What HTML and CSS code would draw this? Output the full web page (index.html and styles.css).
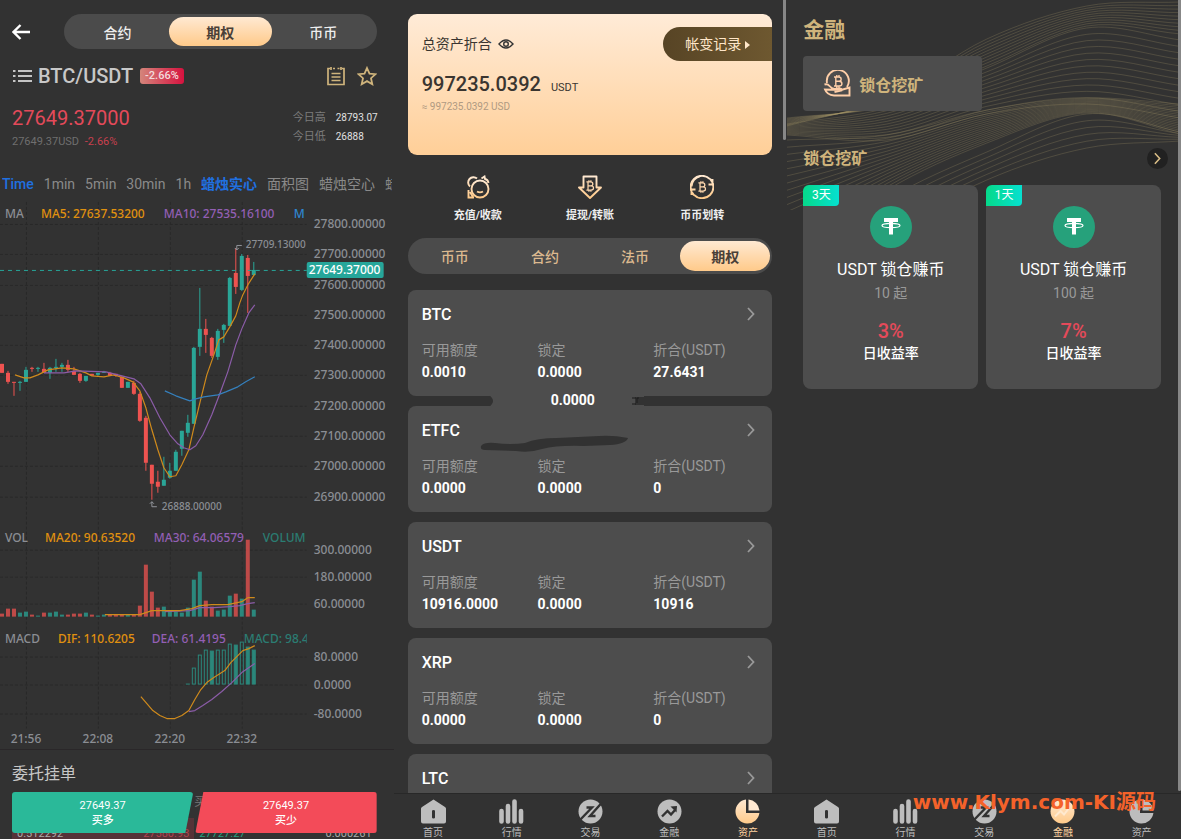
FILE: index.html
```html
<!DOCTYPE html>
<html lang="zh-CN">
<head>
  <meta charset="UTF-8" />
  <meta name="viewport" content="width=device-width, initial-scale=1.0"/>
  <title>BTC/USDT</title>
  <link rel="stylesheet" href="styles.css">
</head>
<body>

  <!-- Shared icons -->
  <svg class="sprite" aria-hidden="true">
    <defs>
      <linearGradient id="gold" x1="0" y1="0" x2="0" y2="1">
        <stop offset="0" stop-color="#ffe9d2"/>
        <stop offset="1" stop-color="#ffca8a"/>
      </linearGradient>
    </defs>
    <symbol id="chevron" viewBox="0 0 8 14"><path d="M1 1l5.5 6L1 13" fill="none" stroke="currentColor" stroke-width="1.8"/></symbol>
    <symbol id="btc" viewBox="0 0 10 14">
      <path d="M1 2.500h4.600c3.400 0 3.400 4.300 0 4.300H2.600h3.400c3.900 0 3.900 4.700 0 4.700H1M2.800 2.500v9M3.800.5v2M6 .5v2M3.800 11.500v2M6 11.500v2" fill="none" stroke="currentColor" stroke-width="1.400"/>
    </symbol>
    <symbol id="home" viewBox="0 0 25 25">
      <path fill-rule="evenodd" d="M12.500 0.500L24 8a2 2 0 0 1 1 1.800V22.500a2 2 0 0 1-2 2H2a2 2 0 0 1-2-2V9.800A2 2 0 0 1 1 8zM11 12v6.500q0 1 1.500 1t1.500-1V12q0-1-1.500-1t-1.500 1z" fill="currentColor"/>
    </symbol>
    <symbol id="bars" viewBox="0 0 25 25">
      <path d="M2.500 12v10.500M9 7v15.500M15.500 2.500v20M22 12v10.500" stroke="currentColor" stroke-width="4.600" stroke-linecap="round"/>
    </symbol>
    <symbol id="trade" viewBox="0 0 25 25">
      <circle cx="12.500" cy="12.500" r="12" fill="currentColor"/>
      <path d="M1 22L14 8.500H8.500M24 3.500L12 17h5.500" fill="none" stroke="#323232" stroke-width="2.400"/>
    </symbol>
    <symbol id="finance" viewBox="0 0 25 25">
      <circle cx="12.500" cy="12.500" r="12" fill="currentColor"/>
      <path d="M5 17.500l5.500-5.500 3.500 3.500 4.500-5" fill="none" stroke="#323232" stroke-width="2.400"/>
      <path d="M13.500 7.500L20 7l-.5 6.500z" fill="#323232"/>
    </symbol>
    <symbol id="finance-on" viewBox="0 0 25 25">
      <circle cx="12.500" cy="12.500" r="12" fill="url(#gold)"/>
      <path d="M5 17.500l5.500-5.500 3.500 3.500 5.500-7" fill="none" stroke="#ffe9cf" stroke-width="2"/>
    </symbol>
    <symbol id="assets" viewBox="0 0 25 25">
      <path d="M11 .6V14h13.400A12 12 0 1 1 11 .6z" fill="currentColor"/>
      <path d="M13.500.5A12 12 0 0 1 24.500 11.500h-11z" fill="currentColor"/>
    </symbol>
    <symbol id="assets-on" viewBox="0 0 25 25">
      <path d="M11 .6V14h13.400A12 12 0 1 1 11 .6z" fill="url(#gold)"/>
      <path d="M13.500.5A12 12 0 0 1 24.500 11.500h-11z" fill="#ffe9d2"/>
    </symbol>
    <symbol id="tether" viewBox="0 0 42 42">
      <circle cx="21" cy="21" r="21" fill="#26a17b"/>
      <path d="M14 12h14v4h-5v12.500h-4V16h-5z" fill="#fff"/>
      <ellipse cx="21" cy="19.500" rx="9" ry="2.200" fill="none" stroke="#fff" stroke-width="1.200"/>
    </symbol>
  </svg>

  <main class="screens">

    <!-- Trade screen -->
    <section class="screen trade">
      <header class="trade-head">
        <a class="back" href="#" aria-label="返回"><svg viewBox="0 0 18 16"><path d="M8.500 1L1.500 8l7 7M2 8h16" fill="none" stroke="#fff" stroke-width="2.400"/></svg></a>
        <div class="switch">
          <button>合约</button>
          <button class="active">期权</button>
          <button>币币</button>
        </div>
      </header>

      <div class="pair">
        <svg class="pair-menu" viewBox="0 0 19 14"><path d="M5 2h14M5 7h14M5 12h14M0 2h2.500M0 7h2.500M0 12h2.500" stroke="#c4c4c4" stroke-width="1.800"/></svg>
        <h1>BTC/USDT</h1>
        <span class="change">-2.66%</span>
        <button class="pair-tool" aria-label="订单"><svg viewBox="0 0 20 20"><path d="M4 2.500H2v16h16v-16h-2M7 2.500h2M11.500 2.500h2M5 1v3M15 1v3M5.500 7.500h9M5.500 11h9M5.500 14.500h9" fill="none" stroke="#cfb47c" stroke-width="1.700"/></svg></button>
        <button class="pair-tool" aria-label="收藏"><svg viewBox="0 0 20 20"><path d="M10 2l2.500 5.600 6 .6-4.500 4 1.300 6L10 15.100 4.700 18.200 6 12.200l-4.500-4 6-.6z" fill="none" stroke="#cfb47c" stroke-width="1.800"/></svg></button>
      </div>

      <div class="quote">
        <div>
          <p class="price">27649.37000</p>
          <p class="usd">27649.37USD <span>-2.66%</span></p>
        </div>
        <dl class="range">
          <dt>今日高</dt><dd>28793.07</dd>
          <dt>今日低</dt><dd>26888</dd>
        </dl>
      </div>

      <div class="periods">
        <button class="active">Time</button>
        <button>1min</button>
        <button>5min</button>
        <button>30min</button>
        <button>1h</button>
        <button class="active bold">蜡烛实心</button>
        <button>面积图</button>
        <button>蜡烛空心</button>
        <button>蜡烛</button>
      </div>

      <svg class="chart" id="chart" viewBox="0 198 394 548">
        <clipPath id="plot"><rect x="0" y="198" width="307" height="548"/></clipPath>
        <g id="grid"></g>
        <g id="series"></g>
        <g clip-path="url(#plot)">
          <text x="5" y="218">MA</text>
          <text x="41" y="218" class="orange">MA5: 27637.53200</text>
          <text x="164" y="218" class="purple">MA10: 27535.16100</text>
          <text x="294" y="218" class="blue">M</text>
          <text x="5" y="542">VOL</text>
          <text x="45" y="542" class="orange">MA20: 90.63520</text>
          <text x="154" y="542" class="purple">MA30: 64.06579</text>
          <text x="263" y="542" class="teal">VOLUM</text>
          <text x="5" y="643">MACD</text>
          <text x="58" y="643" class="orange">DIF: 110.6205</text>
          <text x="152" y="643" class="purple">DEA: 61.4195</text>
          <text x="244" y="643" class="teal">MACD: 98.4</text>
        </g>
        <path d="M0 270.500h307" stroke="#26a69a" stroke-dasharray="4 4"/>
        <path d="M237 250v-4.500h5M235 248l2 2 2-2M152 502v5h5M150 504l2-2 2 2" fill="none" stroke="#92959b"/>
        <text x="246" y="248" class="small">27709.13000</text>
        <text x="162" y="510" class="small">26888.00000</text>
        <rect x="307" y="262" width="77" height="16" rx="2" fill="#26a69a"/>
        <text x="309" y="274" class="white">27649.37000</text>
      </svg>

      <div class="book">
        <h2>委托挂单</h2>
        <div class="book-head"><span></span><span>买</span></div>
        <div class="book-row">
          <p class="bid"><span>0.512292</span><b>27580.93</b></p>
          <p class="ask"><b>27727.27</b><span>0.000261</span></p>
        </div>
      </div>

      <div class="orders">
        <button class="up">27649.37<span>买多</span></button>
        <button class="down">27649.37<span>买少</span></button>
      </div>
    </section>

    <!-- Assets screen -->
    <section class="screen assets">
      <div class="content">
        <div class="balance">
          <p class="balance-label">总资产折合
            <svg viewBox="0 0 16 10"><path d="M1 5q7-8 14 0q-7 8-14 0z" fill="none" stroke="#333" stroke-width="1.400"/><circle cx="8" cy="5" r="2.300" fill="none" stroke="#333" stroke-width="1.400"/></svg>
          </p>
          <p class="balance-total">997235.0392 <small>USDT</small></p>
          <p class="balance-usd">≈ 997235.0392 USD</p>
          <a class="history" href="#">帐变记录<svg viewBox="0 0 5 8"><path d="M0 0l5 4-5 4z" fill="#ffe6c8"/></svg></a>
        </div>

        <div class="actions">
          <a href="#">
            <svg viewBox="0 0 24 24"><g fill="none" stroke="url(#gold)" stroke-width="1.900"><circle cx="14" cy="14" r="8.500"/><path d="M4 11.500A5 5 0 1 1 11 3.500M15.500 3.500l3-2 .5 2.500q3 .5 3.500 4M2.500 15v7.500H8M4 17l3 5M11 16.500q3 1.800 6 0"/></g></svg>
            充值/收款
          </a>
          <a href="#">
            <svg viewBox="0 0 24 24"><path d="M5.500 1.500h13v11H23L12 23 1 12.500h4.500z" fill="none" stroke="url(#gold)" stroke-width="1.900" stroke-linejoin="round"/><use href="#btc" x="7.500" y="4.500" width="9" height="13"/></svg>
            提现/转账
          </a>
          <a href="#">
            <svg viewBox="0 0 24 24"><path d="M3.800 20A11 11 0 0 1 20 4.200M20.200 4A11 11 0 0 1 4 19.800M1.500 11.500A11 11 0 0 1 10 1.200M22.500 4v5.500h-4M1.500 20v-5.500h4" fill="none" stroke="url(#gold)" stroke-width="1.900"/><use href="#btc" x="7.500" y="5.500" width="9" height="13"/></svg>
            币币划转
          </a>
        </div>

        <div class="switch wallet">
          <button>币币</button>
          <button>合约</button>
          <button>法币</button>
          <button class="active">期权</button>
        </div>

        <div class="coins">
          <article class="coin">
            <a class="coin-name" href="#">BTC<svg><use href="#chevron"/></svg></a>
            <dl>
              <div><dt>可用额度</dt><dd>0.0010</dd></div>
              <div><dt>锁定</dt><dd>0.0000</dd></div>
              <div><dt>折合(USDT)</dt><dd>27.6431</dd></div>
            </dl>
          </article>
          <article class="coin">
            <svg class="bridge" viewBox="0 0 156 12"><path d="M1 0h146v1h9v1h-9v8h9v2H1q8-6 0-12z" fill="#4d4d4d"/><path d="M144 3h4M144 9h4M149 8V3h2" fill="none" stroke="#1c1c1c"/></svg>
            <span class="stray">0.0000</span>
            <svg class="stroke" viewBox="0 0 150 18"><path d="M2 11q3-4 14-3 16 2 30 0Q58 3 78 3l42-2q14-1 29 2-2 6-18 7l-26 1q-26-1-42 3-12 4-26 2L6 15q-5 0-4-4z" fill="#323232"/></svg>
            <a class="coin-name" href="#">ETFC<svg><use href="#chevron"/></svg></a>
            <dl>
              <div><dt>可用额度</dt><dd>0.0000</dd></div>
              <div><dt>锁定</dt><dd>0.0000</dd></div>
              <div><dt>折合(USDT)</dt><dd>0</dd></div>
            </dl>
          </article>
          <article class="coin">
            <a class="coin-name" href="#">USDT<svg><use href="#chevron"/></svg></a>
            <dl>
              <div><dt>可用额度</dt><dd>10916.0000</dd></div>
              <div><dt>锁定</dt><dd>0.0000</dd></div>
              <div><dt>折合(USDT)</dt><dd>10916</dd></div>
            </dl>
          </article>
          <article class="coin">
            <a class="coin-name" href="#">XRP<svg><use href="#chevron"/></svg></a>
            <dl>
              <div><dt>可用额度</dt><dd>0.0000</dd></div>
              <div><dt>锁定</dt><dd>0.0000</dd></div>
              <div><dt>折合(USDT)</dt><dd>0</dd></div>
            </dl>
          </article>
          <article class="coin">
            <a class="coin-name" href="#">LTC<svg><use href="#chevron"/></svg></a>
          </article>
        </div>
      </div>

      <nav class="tabbar">
        <a href="#"><svg><use href="#home"/></svg>首页</a>
        <a href="#"><svg><use href="#bars"/></svg>行情</a>
        <a href="#"><svg><use href="#trade"/></svg>交易</a>
        <a href="#"><svg><use href="#finance"/></svg>金融</a>
        <a href="#" class="active"><svg><use href="#assets-on"/></svg>资产</a>
      </nav>
    </section>

    <!-- Finance screen -->
    <section class="screen finance">
      <svg class="waves" id="waves" viewBox="0 0 394 210" preserveAspectRatio="none"></svg>
      <div class="content">
        <h1>金融</h1>
        <a class="mining" href="#">
          <svg viewBox="0 0 28 28"><g fill="none" stroke="#ffcfa8" stroke-width="1.900"><path d="M4 13A11 11 0 1 1 24 17"/><path d="M1.500 14.500q3-1 5 1.500t5 3l5-.5q2.500 0 2 2l-7 1.500M18 20l8.500-2.500v8H11q-7-.5-9-6z"/></g><use href="#btc" x="10" y="4.500" width="10" height="14"/></svg>
          锁仓挖矿
        </a>
        <div class="section-head">
          <h2>锁仓挖矿</h2>
          <a class="more" href="#" aria-label="更多"><svg><use href="#chevron"/></svg></a>
        </div>
        <div class="plans">
          <article class="plan">
            <span class="days">3天</span>
            <svg><use href="#tether"/></svg>
            <h3>USDT 锁仓赚币</h3>
            <p class="min">10 起</p>
            <p class="rate">3%</p>
            <p>日收益率</p>
          </article>
          <article class="plan">
            <span class="days">1天</span>
            <svg><use href="#tether"/></svg>
            <h3>USDT 锁仓赚币</h3>
            <p class="min">100 起</p>
            <p class="rate">7%</p>
            <p>日收益率</p>
          </article>
        </div>
      </div>

      <nav class="tabbar">
        <a href="#"><svg><use href="#home"/></svg>首页</a>
        <a href="#"><svg><use href="#bars"/></svg>行情</a>
        <a href="#"><svg><use href="#trade"/></svg>交易</a>
        <a href="#" class="active"><svg><use href="#finance-on"/></svg>金融</a>
        <a href="#"><svg><use href="#assets"/></svg>资产</a>
      </nav>
      <p class="watermark">www.Klym.com-KI源码</p>
    </section>

  </main>

  <script src="script.js"></script>
</body>
</html>
```
FILE: styles.css
```css
* {
  margin: 0;
  padding: 0;
  box-sizing: border-box;
}

body {
  background: #323232;
  color: #fff;
  font-family: Roboto, 'Noto Sans CJK SC', sans-serif;
  font-size: 14px;
}

a {
  color: inherit;
  text-decoration: none;
}

button {
  font: inherit;
  color: inherit;
  background: none;
  border: none;
  cursor: pointer;
}

.sprite {
  position: absolute;
  width: 0;
  height: 0;
}

.screens {
  display: grid;
  grid-template-columns: repeat(3, minmax(0, 1fr));
  height: 100vh;
}

.screen {
  position: relative;
  display: flex;
  flex-direction: column;
  overflow: hidden;
}

.content {
  flex: 1;
  min-height: 0;
  overflow: hidden;
}

/* Segmented switch */
.switch {
  flex: 1;
  display: flex;
  padding: 3px 2px;
  border-radius: 18px;
  background: #4b4b4b;
}

.switch button {
  flex: 1;
  border-radius: 16px;
  color: #eee;
  font-weight: 500;
}

.switch .active {
  background: linear-gradient(#ffe9d2, #ffca8a);
  color: #4a4038;
  font-weight: 700;
}

/* Trade screen */
.trade-head {
  display: flex;
  align-items: center;
  gap: 34px;
  height: 35px;
  margin: 14px 17px 0 12px;
}

.trade-head .switch {
  height: 35px;
}

.back svg {
  display: block;
  width: 18px;
  height: 16px;
}

.pair {
  display: flex;
  align-items: center;
  height: 20px;
  margin: 17px 17px 0 13px;
}

.pair-menu {
  width: 19px;
  height: 14px;
  margin-right: 6px;
}

.pair h1 {
  font-size: 20px;
  font-weight: 500;
  color: #c8c8c8;
}

.change {
  margin: 0 auto 0 7px;
  padding: 0 5px;
  border-radius: 3px;
  background: linear-gradient(90deg, #d4857b, #d6123f);
  color: #f3dcdc;
  font-size: 11px;
  font-weight: 500;
  line-height: 16px;
}

.pair-tool {
  width: 20px;
  height: 20px;
  margin-left: 11px;
}

.pair-tool svg {
  display: block;
}

.quote {
  display: flex;
  justify-content: space-between;
  margin: 20px 16px 0 12px;
}

.price {
  color: #e44a5a;
  font-size: 20px;
  font-weight: 400;
  line-height: 24px;
}

.usd {
  margin-top: 4px;
  color: #6f6f6f;
  font-size: 11px;
  line-height: 16px;
}

.usd span {
  margin-left: 3px;
  color: #c8404f;
}

.range {
  display: grid;
  grid-template-columns: auto auto;
  column-gap: 10px;
  align-content: start;
  margin-top: 2px;
  color: #e0e0e0;
  font-size: 11px;
  line-height: 19px;
}

.range dt {
  color: #7c7c7c;
}

.range dd {
  font-size: 10px;
}

.periods {
  flex: none;
  display: flex;
  gap: 10px;
  margin: 24px 2px 4px;
  overflow: hidden;
  color: #8a8a8a;
  line-height: 20px;
  white-space: nowrap;
}

.periods button {
  flex: none;
}

.periods .active {
  color: #2070e0;
  font-weight: 500;
}

.periods .bold {
  font-weight: 700;
}

.chart {
  display: block;
  flex: none;
  width: 100%;
}

.chart text {
  fill: #8b8e94;
  font-family: 'Noto Sans', sans-serif;
  font-size: 12px;
  font-weight: 500;
}

.chart .small {
  font-size: 10px;
}

.chart .white {
  fill: #fff;
}

.chart .orange {
  fill: #e0910f;
}

.chart .purple {
  fill: #935fb4;
}

.chart .blue {
  fill: #2f86d0;
}

.chart .teal {
  fill: #2b7d72;
}

.book {
  flex: none;
  margin-top: 3px;
  border-top: 1px solid #2a2729;
  padding: 12px 17px 0 12px;
}

.book h2 {
  color: #c8c8c8;
  font-size: 16px;
  font-weight: 400;
  line-height: 24px;
}

.book-head,
.book-row {
  display: grid;
  grid-template-columns: 1fr 1fr;
}

.book-head {
  color: #777;
  font-size: 12px;
  line-height: 32px;
}

.book-row p {
  display: flex;
  justify-content: space-between;
  padding: 0 5px;
  color: #aaa;
  font-size: 11px;
  line-height: 32px;
}

.book-row b {
  font-weight: 400;
}

.bid {
  background: #553338;
}

.bid b {
  color: #b04450;
}

.ask b {
  color: #27a080;
}

.orders {
  position: absolute;
  right: 17px;
  bottom: 6px;
  left: 12px;
  display: flex;
  gap: 2px;
}

.orders button {
  flex: 1;
  height: 41px;
  border-radius: 3px;
  font-size: 11px;
  line-height: 15px;
}

.orders span {
  display: block;
  font-weight: 500;
}

.up {
  background: #2ab999;
  clip-path: polygon(0 0, 100% 0, calc(100% - 8px) 100%, 0 100%);
}

.down {
  background: #f34b59;
  clip-path: polygon(8px 0, 100% 0, 100% 100%, 0 100%);
}

/* Assets screen */
.assets .content {
  padding: 14px 15px 0 14px;
}

.assets::after,
.finance::after {
  content: "";
  position: absolute;
  top: 0;
  right: 1px;
  width: 3px;
  height: 140px;
  border-radius: 0 0 2px 2px;
  background: #878787;
}

.balance {
  position: relative;
  padding: 20px 14px 41px;
  border-radius: 9px;
  background: linear-gradient(#ffebd7, #ffcf98);
  color: #3a3530;
}

.balance-label {
  display: flex;
  align-items: center;
  gap: 6px;
  line-height: 20px;
}

.balance-label svg {
  width: 16px;
  height: 10px;
}

.balance-total {
  display: flex;
  align-items: baseline;
  gap: 10px;
  height: 26px;
  margin-top: 17px;
  font-size: 20px;
  font-weight: 500;
  line-height: 26px;
}

.balance-total small {
  font-size: 11px;
  font-weight: 400;
}

.balance-usd {
  height: 14px;
  margin-top: 3px;
  color: #b09a82;
  font-size: 10px;
  line-height: 14px;
}

.history {
  position: absolute;
  top: 13px;
  right: 0;
  padding: 0 22px;
  border-radius: 17px 0 0 17px;
  background: linear-gradient(90deg, #574425, #6e5830);
  color: #ffe6c8;
  line-height: 34px;
}

.history svg {
  width: 5px;
  height: 8px;
  margin-left: 4px;
}

.actions {
  display: flex;
  margin: 20px 14px 14px;
}

.actions a {
  flex: 1;
  display: flex;
  flex-direction: column;
  align-items: center;
  gap: 9px;
  color: #eee;
  font-size: 11px;
  font-weight: 700;
  line-height: 16px;
}

.actions svg {
  width: 24px;
  height: 24px;
  color: #ffd8ae;
}

.wallet {
  height: 36px;
}

.wallet button {
  color: #dcb98f;
}

.coins {
  display: grid;
  gap: 10px;
  margin-top: 16px;
}

.coin {
  position: relative;
  padding: 15px 17px 14px 14px;
  border-radius: 8px;
  background: #4d4d4d;
}

.coin-name {
  display: flex;
  justify-content: space-between;
  font-size: 16px;
  font-weight: 500;
  line-height: 20px;
}

.coin-name svg {
  width: 8px;
  height: 14px;
  margin-top: 2px;
  color: #999;
}

.coin dl {
  display: grid;
  grid-template-columns: 1fr 1fr 102px;
  margin-top: 15px;
  line-height: 20px;
}

.coin dt {
  color: #999;
}

.coin dd {
  margin-top: 2px;
  font-weight: 700;
}

/* Filled gap between two cards */
.bridge {
  position: absolute;
  top: -11px;
  left: 80px;
  width: 156px;
  height: 12px;
}

.stray {
  position: absolute;
  top: -16px;
  left: 143px;
  font-weight: 700;
  line-height: 20px;
}

.stroke {
  position: absolute;
  top: 29px;
  left: 71px;
  width: 150px;
  height: 18px;
}

/* Bottom navigation */
.tabbar {
  position: relative;
  display: flex;
  height: 46px;
  padding-top: 5px;
  border-top: 1px solid #282828;
  background: #323232;
}

.tabbar a {
  flex: 1;
  display: flex;
  flex-direction: column;
  align-items: center;
  gap: 3px;
  color: #bdbdbd;
  font-size: 10px;
  line-height: 12px;
}

.tabbar svg {
  width: 25px;
  height: 25px;
}

.tabbar .active {
  color: #ffd3a0;
}

/* Finance screen */
.finance .content {
  position: relative;
  padding: 15px 20px 0 16px;
}

.finance::after {
  right: 0;
  height: calc(100% - 48px);
}

.waves {
  position: absolute;
  top: 0;
  left: 0;
  width: 100%;
  height: 210px;
}

.finance h1 {
  color: #cfb47c;
  font-size: 21px;
  font-weight: 700;
  line-height: 30px;
}

.mining {
  display: flex;
  align-items: center;
  gap: 8px;
  width: 50%;
  height: 55px;
  margin-top: 11px;
  padding-left: 20px;
  border-radius: 4px;
  background: #4d4d4d;
  color: #cfb47c;
  font-size: 16px;
  font-weight: 700;
}

.mining svg {
  width: 28px;
  height: 28px;
}

.mining use {
  color: #ffcfa8;
}

.section-head {
  display: flex;
  align-items: center;
  justify-content: space-between;
  margin: 37px -7px 16px 0;
}

.section-head h2 {
  color: #cfb47c;
  font-size: 16px;
  font-weight: 700;
  line-height: 21px;
}

.more {
  display: grid;
  place-items: center;
  width: 21px;
  height: 21px;
  border-radius: 50%;
  background: #212121;
  color: #d9bd86;
}

.more svg {
  width: 7px;
  height: 13px;
}

.plans {
  display: grid;
  grid-template-columns: 1fr 1fr;
  gap: 8px;
}

.plan {
  position: relative;
  padding: 21px 0 26px;
  border-radius: 8px;
  background: #4d4d4d;
  font-weight: 500;
  line-height: 20px;
  text-align: center;
}

.plan svg {
  display: block;
  width: 42px;
  height: 42px;
  margin: 0 auto 11px;
}

.plan h3 {
  font-size: 16px;
  font-weight: 400;
  line-height: 22px;
}

.plan .min {
  margin: 2px 0 16px;
  color: #999;
  font-weight: 400;
}

.plan .rate {
  color: #e44a5a;
  font-size: 20px;
  line-height: 24px;
}

.days {
  position: absolute;
  top: 0;
  left: 0;
  width: 36px;
  border-radius: 6px 0 4px 0;
  background: linear-gradient(90deg, #06d98a, #06e0d0);
  font-size: 12px;
  font-weight: 400;
  line-height: 21px;
}

.watermark {
  position: absolute;
  right: 25px;
  bottom: 24px;
  color: #f4622a;
  font-family: 'DejaVu Sans', 'Noto Sans CJK SC', sans-serif;
  font-size: 20px;
  font-weight: 700;
  line-height: 26px;
  white-space: nowrap;
}
```
FILE: script.js
```js
const UP = '#2aa697';
const DOWN = '#ee5350';
const STEP = 6;

// [direction, body top, body bottom, high, low, volume]
const candles = [
  ['d', 364, 373, 364, 373, 3], ['d', 373, 382, 371, 384, 8], ['d', 382, 383, 382, 396, 8],
  ['u', 382, 383, 381, 391, 4], ['u', 370, 382, 367, 382, 5], ['d', 368, 369, 367, 372, 2],
  ['u', 368, 369, 367, 372, 1], ['d', 369, 373, 363, 373, 4], ['u', 368, 373, 367, 379, 4],
  ['u', 367, 368, 359, 372, 5], ['u', 365, 367, 363, 372, 2], ['d', 365, 370, 360, 372, 2],
  ['d', 371, 375, 367, 375, 3], ['d', 374, 381, 373, 383, 3], ['u', 376, 381, 376, 382, 4],
  ['d', 374, 376, 374, 376, 2], ['u', 373, 375, 373, 376, 1], ['u', 372, 373, 371, 373, 2],
  ['d', 373, 376, 372, 376, 2], ['d', 374, 376, 374, 377, 2], ['d', 377, 388, 376, 388, 2],
  ['u', 382, 388, 382, 388, 2], ['d', 383, 394, 381, 395, 2], ['d', 394, 421, 392, 422, 11],
  ['d', 418, 463, 416, 471, 52], ['d', 465, 484, 465, 500, 25], ['d', 482, 487, 471, 493, 9],
  ['u', 480, 486, 457, 486, 10], ['u', 471, 478, 463, 479, 5], ['u', 452, 471, 450, 471, 5],
  ['u', 431, 449, 431, 456, 4], ['u', 423, 433, 415, 437, 9], ['u', 348, 424, 347, 424, 37],
  ['u', 329, 347, 288, 356, 45], ['d', 329, 335, 319, 353, 16], ['d', 338, 356, 337, 358, 10],
  ['u', 331, 357, 329, 360, 6], ['u', 325, 330, 324, 343, 7], ['u', 278, 326, 277, 326, 21],
  ['d', 273, 287, 248, 294, 23], ['u', 256, 290, 254, 291, 18], ['d', 258, 276, 255, 313, 77],
  ['u', 270, 275, 262, 276, 7]
];

// [top, filled], starting at candle 32
const macd = [
  [668, 0], [655, 0], [650, 0], [651, 1], [650, 0], [650, 0],
  [644, 0], [645, 1], [642, 0], [647, 1], [650, 1]
];

const lines = [
  ['#cf8a1c', '15,375 24,378 30,378 38,375 48,370 62,368 74,369 86,373 92,376 104,377 114,375 124,378 133,382 140,391 146,408 152,430 158,450 164,468 170,477 176,476 182,465 189,450 194,428 201,399 207,375 213,358 219,340 224,337 230,327 236,316 240,303 243,295 248,285 255,274'],
  ['#8b5ca8', '44,373 64,373 76,371 106,372 122,376 134,379 141,384 150,398 160,418 170,435 178,444 184,448 190,450 196,446 203,435 212,415 220,394 228,372 236,345 242,329 249,313 255,305'],
  ['#3580bd', '165,391 176,396 190,401 196,399 204,397 218,395 226,392 238,387 246,382 255,377'],
  ['#8b5ca8', '165,612 190,611 200,608 214,608 230,607 240,606 248,604 255,603'],
  ['#cf8a1c', '105,615 140,615 152,611 180,611 192,609 200,606 212,605 228,605 242,602 248,598 255,598'],
  ['#8b5ca8', '189,712 195,711 203,706 212,700 222,692 232,683 242,673 255,664'],
  ['#cf8a1c', '141,697 147,704 153,711 160,716 167,719 175,719 182,716 189,711 195,700 201,690 207,683 214,678 225,671 231,663 237,657 243,651 249,649 255,646']
];

const axis = [
  [224, '27800.00000'], [254, '27700.00000'], [285, '27600.00000'], [315, '27500.00000'],
  [345, '27400.00000'], [375, '27300.00000'], [406, '27200.00000'], [436, '27100.00000'],
  [466, '27000.00000'], [497, '26900.00000'], [550, '300.00000'], [577, '180.00000'],
  [604, '60.00000'], [657, '80.0000'], [685, '0.0000'], [714, '-80.0000']
];

const times = [[26, '21:56'], [98, '22:08'], [170, '22:20'], [242, '22:32']];

let grid = '';
axis.forEach(([y, label]) => {
  grid += `<path d="M0 ${y + 0.5}H307" stroke="#292929" stroke-dasharray="3 2"/>`;
  grid += `<text x="314" y="${y + 4}">${label}</text>`;
});
times.forEach(([x, label]) => {
  grid += `<path d="M${x + 0.5} 202V729" stroke="#292929" stroke-dasharray="3 2"/>`;
  grid += `<text x="${x}" y="743" text-anchor="middle">${label}</text>`;
});
document.getElementById('grid').innerHTML = grid;

let series = '';
candles.forEach(([dir, top, bottom, high, low, vol], i) => {
  const x = 2 + i * STEP;
  const color = dir === 'u' ? UP : DOWN;
  series += `<rect x="${x - 2}" y="${top}" width="4" height="${bottom - top}" fill="${color}"/>`;
  series += `<rect x="${x - 0.5}" y="${high}" width="1" height="${low - high}" fill="${color}"/>`;
  series += `<rect x="${x - 2}" y="${617 - vol}" width="4" height="${vol}" fill="${color}" opacity="0.75"/>`;
});
series += '<rect x="186" y="684" width="4" height="1" fill="#2b877b"/>';
macd.forEach(([top, filled], i) => {
  const x = 192 + i * STEP;
  series += `<rect x="${x + 0.5}" y="${top + 0.5}" width="3" height="${684 - top}" fill="${filled ? '#2b877b' : 'none'}" stroke="#2b877b"/>`;
});
lines.forEach(([color, points]) => {
  series += `<polyline points="${points}" fill="none" stroke="${color}" stroke-width="1.2" stroke-linejoin="round"/>`;
});
document.getElementById('series').innerHTML = series;

// Background waves: each family blends between two edge curves
const xs = [0, 100, 200, 300, 394];
const families = [
  [[126, 98, 39, 6, 2], [118, 106, 66, 26, 34], 10],
  [[124, 108, 68, 28, 40], [135, 140, 114, 104, 118], 13],
  [[140, 135, 110, 98, 104], [262, 190, 143, 113, 134], 18],
  [[275, 200, 152, 114, 132], [310, 235, 180, 148, 141], 6]
];

function curve(ys) {
  let d = `M${xs[0]} ${ys[0]}`;
  for (let i = 0; i < xs.length - 1; i++) {
    const w = (xs[i + 1] - xs[i]) / 3;
    const slope = (k) => {
      const a = Math.max(k - 1, 0);
      const b = Math.min(k + 1, xs.length - 1);
      return (ys[b] - ys[a]) / (xs[b] - xs[a]);
    };
    d += `C${xs[i] + w} ${ys[i] + slope(i) * w} ${xs[i + 1] - w} ${ys[i + 1] - slope(i + 1) * w} ${xs[i + 1]} ${ys[i + 1]}`;
  }
  return d;
}

let waves = '';
families.forEach(([from, to, count]) => {
  for (let n = 0; n < count; n++) {
    const t = n / (count - 1);
    waves += `<path d="${curve(from.map((y, i) => y + (to[i] - y) * t))}" fill="none" stroke="#a89a68" stroke-width="1" opacity="0.26"/>`;
  }
});
document.getElementById('waves').innerHTML = waves;
```
